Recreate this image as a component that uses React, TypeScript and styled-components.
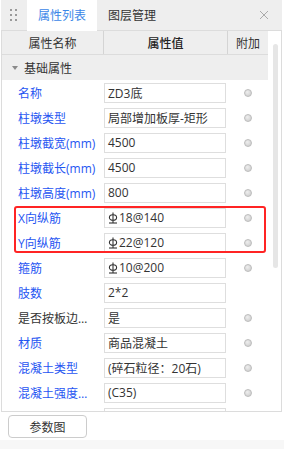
import React from "react";
import styled, { createGlobalStyle } from "styled-components";

const GlobalStyle = createGlobalStyle`
  body {
    margin: 0;
    background: #ffffff;
    font-family: "Open Sans", "Noto Sans CJK SC", sans-serif;
    font-size: 12px;
    color: #333333;
  }
`;

type Row = {
  label: string;
  value: string;
  steel?: boolean;
  dark?: boolean;
  dot?: boolean;
};

const rows: Row[] = [
  { label: "名称", value: "ZD3底", dot: true },
  { label: "柱墩类型", value: "局部增加板厚-矩形", dot: true },
  { label: "柱墩截宽(mm)", value: "4500", dot: true },
  { label: "柱墩截长(mm)", value: "4500", dot: true },
  { label: "柱墩高度(mm)", value: "800", dot: true },
];

const marked: Row[] = [
  { label: "X向纵筋", value: "18@140", steel: true, dot: true },
  { label: "Y向纵筋", value: "22@120", steel: true, dot: true },
];

const rest: Row[] = [
  { label: "箍筋", value: "10@200", steel: true, dot: true },
  { label: "肢数", value: "2*2" },
  { label: "是否按板边距生成", value: "是", dark: true, dot: true },
  { label: "材质", value: "商品混凝土", dot: true },
  { label: "混凝土类型", value: "(碎石粒径：20石)", dot: true },
  { label: "混凝土强度等级", value: "(C35)", dot: true },
  { label: "保护层厚度(mm)", value: "", dot: true },
];

// 三级钢符号
const SteelMark = () => (
  <svg width="10" height="12" viewBox="0 0 10 12" style={{ marginRight: 1 }}>
    <g fill="none" stroke="#333" strokeWidth="1.1">
      <ellipse cx="5" cy="5.5" rx="3.6" ry="2.8" />
      <line x1="5" y1="0.5" x2="5" y2="11" />
      <line x1="1" y1="11" x2="9" y2="11" />
    </g>
  </svg>
);

const PropRow = ({ row }: { row: Row }) => (
  <RowWrap>
    <Label dark={row.dark}>{row.label}</Label>
    <ValueCell>
      <ValueBox>
        {row.steel ? <SteelMark /> : null}
        {row.value}
      </ValueBox>
    </ValueCell>
    <ExtraCell>{row.dot ? <Dot /> : null}</ExtraCell>
  </RowWrap>
);

const App = () => {
  return (
    <>
      <GlobalStyle />
      <Page>
        <Panel>
          <TabBar>
            <Grip>
              {Array.from({ length: 6 }).map((_, i) => (
                <GripDot key={i} />
              ))}
            </Grip>
            <Tab active>属性列表</Tab>
            <Tab>图层管理</Tab>
            <Close>
              <svg width="10" height="10" viewBox="0 0 10 10">
                <g stroke="#aaa" strokeWidth="1">
                  <line x1="1" y1="1" x2="9" y2="9" />
                  <line x1="9" y1="1" x2="1" y2="9" />
                </g>
              </svg>
            </Close>
          </TabBar>
          <Body>
            <Content>
              <Header>
                <HeadCell>属性名称</HeadCell>
                <HeadCell main>属性值</HeadCell>
                <HeadCell>附加</HeadCell>
              </Header>
              <Group>
                <Caret />
                基础属性
              </Group>
              {rows.map((r) => (
                <PropRow key={r.label} row={r} />
              ))}
              <Highlight>
                {marked.map((r) => (
                  <PropRow key={r.label} row={r} />
                ))}
              </Highlight>
              {rest.map((r) => (
                <PropRow key={r.label} row={r} />
              ))}
            </Content>
            <ScrollTrack>
              <Thumb />
            </ScrollTrack>
          </Body>
        </Panel>
        <Footer>
          <Button>参数图</Button>
        </Footer>
        <BottomStrip />
      </Page>
    </>
  );
};

export default App;

const Page = styled.div`
  width: 284px;
  height: 449px;
  padding-left: 1px;
  box-sizing: border-box;
  display: flex;
  flex-direction: column;
  overflow: hidden;
`;

const Panel = styled.div`
  width: 281px;
  height: 412px;
  box-sizing: border-box;
  border: 1px solid #dcdcdc;
  border-top: none;
  display: flex;
  flex-direction: column;
`;

const TabBar = styled.div`
  height: 31px;
  box-sizing: border-box;
  background: #eeeeee;
  border-bottom: 1px solid #dcdcdc;
  margin-left: -1px;
  margin-right: -1px;
  display: flex;
  align-items: stretch;
`;

const Grip = styled.div`
  width: 26px;
  display: grid;
  grid-template-columns: repeat(2, 2px);
  grid-template-rows: repeat(3, 2px);
  column-gap: 3px;
  row-gap: 3px;
  align-content: center;
  padding-left: 9px;
  box-sizing: border-box;
`;

const GripDot = styled.span`
  width: 2px;
  height: 2px;
  background: #9a9a9a;
`;

const Tab = styled.div<{ active?: boolean }>`
  padding: 0 11px 0 11px;
  display: flex;
  align-items: center;
  margin-bottom: -1px;
  background: ${({ active }) => (active ? "#ffffff" : "transparent")};
  color: ${({ active }) => (active ? "#3b87e8" : "#333333")};
  line-height: 1;
`;

const Close = styled.div`
  margin-left: auto;
  width: 28px;
  display: flex;
  align-items: center;
  justify-content: center;
  padding-right: 4px;
`;

const Body = styled.div`
  flex: 1;
  display: flex;
  overflow: hidden;
`;

const Content = styled.div`
  width: 266px;
  display: flex;
  flex-direction: column;
  overflow: hidden;
`;

const Header = styled.div`
  height: 24px;
  flex: none;
  box-sizing: border-box;
  background: #eeeeee;
  border-bottom: 1px solid #dcdcdc;
  display: grid;
  grid-template-columns: 101px 124px 41px;
`;

const HeadCell = styled.div<{ main?: boolean }>`
  display: flex;
  align-items: center;
  justify-content: center;
  font-weight: ${({ main }) => (main ? 500 : 400)};
  color: ${({ main }) => (main ? "#222222" : "#333333")};
  & + & {
    border-left: 1px solid #d4d4d4;
  }
`;

const Group = styled.div`
  height: 25px;
  flex: none;
  background: #eeeeee;
  display: flex;
  align-items: center;
  padding-left: 10px;
  color: #333333;
`;

const Caret = styled.span`
  width: 0;
  height: 0;
  border-left: 3px solid transparent;
  border-right: 3px solid transparent;
  border-top: 4px solid #8a8a8a;
  margin-right: 6px;
`;

const RowWrap = styled.div`
  height: 25px;
  flex: none;
  display: grid;
  grid-template-columns: 101px 124px 41px;
  align-items: center;
`;

const Label = styled.div<{ dark?: boolean }>`
  padding-left: 16px;
  padding-right: 6px;
  color: ${({ dark }) => (dark ? "#333333" : "#1f55f2")};
  white-space: nowrap;
  overflow: hidden;
  text-overflow: ellipsis;
`;

const ValueCell = styled.div`
  padding-left: 1px;
`;

const ValueBox = styled.div`
  width: 122px;
  height: 20px;
  box-sizing: border-box;
  border: 1px solid #dedede;
  padding-left: 3px;
  display: flex;
  align-items: center;
  white-space: nowrap;
  overflow: hidden;
  color: #333333;
`;

const ExtraCell = styled.div`
  display: flex;
  justify-content: center;
  align-items: center;
`;

const Dot = styled.span`
  width: 8px;
  height: 8px;
  box-sizing: border-box;
  border-radius: 50%;
  border: 1px solid #bdbdbd;
  background: radial-gradient(circle at 40% 35%, #eeeeee, #c9c9c9);
`;

const Highlight = styled.div`
  position: relative;
  flex: none;

  &::after {
    content: "";
    position: absolute;
    top: 1px;
    left: 12px;
    right: 2px;
    bottom: 2px;
    border: 2px solid #ff2424;
    border-radius: 3px;
    pointer-events: none;
  }
`;

const ScrollTrack = styled.div`
  width: 13px;
  padding-left: 5px;
  padding-top: 13px;
  box-sizing: border-box;
`;

const Thumb = styled.div`
  width: 5px;
  height: 224px;
  border-radius: 3px;
  background: #e6e6e6;
`;

const Footer = styled.div`
  height: 28px;
  padding: 3px 0 0 7px;
  box-sizing: border-box;
`;

const Button = styled.button`
  width: 79px;
  height: 23px;
  background: #ffffff;
  border: 1px solid #cccccc;
  border-radius: 4px;
  font-family: "Open Sans", "Noto Sans CJK SC", sans-serif;
  font-size: 12px;
  color: #333333;
  padding: 0;
`;

const BottomStrip = styled.div`
  flex: 1;
  margin-left: -1px;
  background: #f7f7f7;
`;
